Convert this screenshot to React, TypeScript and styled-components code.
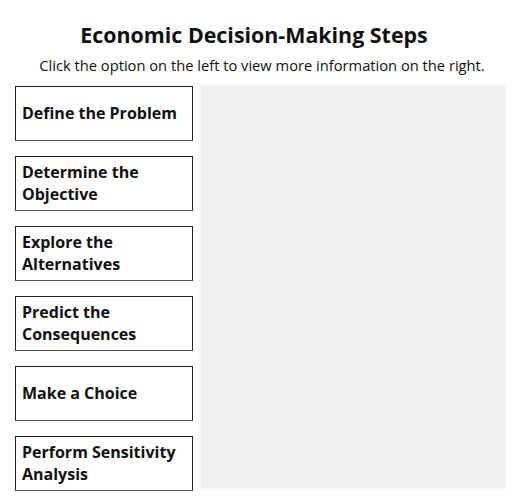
import styled, { createGlobalStyle } from "styled-components"

const GlobalStyle = createGlobalStyle`
  body {
    margin: 0;
    background: #fff;
    font-family: "Open Sans", "Liberation Sans", sans-serif;
    color: #111;
  }
`

const Page = styled.div`
  width: 520px;
  padding-top: 21px;
`

const Title = styled.h1`
  margin: 0;
  text-align: center;
  font-size: 21.4px;
  font-weight: 700;
  line-height: 28px;
  padding-right: 12px;
`

const Subtitle = styled.p`
  margin: 6px 0 0;
  text-align: center;
  font-size: 14.7px;
  line-height: 20px;
  padding-left: 4px;
`

const Body = styled.div`
  display: grid;
  grid-template-columns: 178px 304px;
  column-gap: 8px;
  margin: 11px 0 0 15px;
`

const StepList = styled.div`
  display: flex;
  flex-direction: column;
  gap: 15px;
`

const Step = styled.button`
  height: 55px;
  box-sizing: border-box;
  display: flex;
  align-items: center;
  padding: 0 6px 2px;
  text-align: left;
  background: #fff;
  border: 1px solid #222;
  border-bottom-color: #555;
  font-family: inherit;
  font-size: 16px;
  font-weight: 700;
  line-height: 22px;
  color: #111;
  cursor: pointer;
`

const InfoPanel = styled.div`
  background: #f0f0f0;
  height: 402px;
  box-shadow: 0 0 0 2px #fafafa;
`

const steps = [
  "Define the Problem",
  "Determine the Objective",
  "Explore the Alternatives",
  "Predict the Consequences",
  "Make a Choice",
  "Perform Sensitivity Analysis",
]

const App = () => {
  return (
    <Page>
      <GlobalStyle />
      <Title>Economic Decision-Making Steps</Title>
      <Subtitle>Click the option on the left to view more information on the right.</Subtitle>
      <Body>
        <StepList>
          {steps.map((s) => (
            <Step key={s}>{s}</Step>
          ))}
        </StepList>
        <InfoPanel />
      </Body>
    </Page>
  )
}

export default App
